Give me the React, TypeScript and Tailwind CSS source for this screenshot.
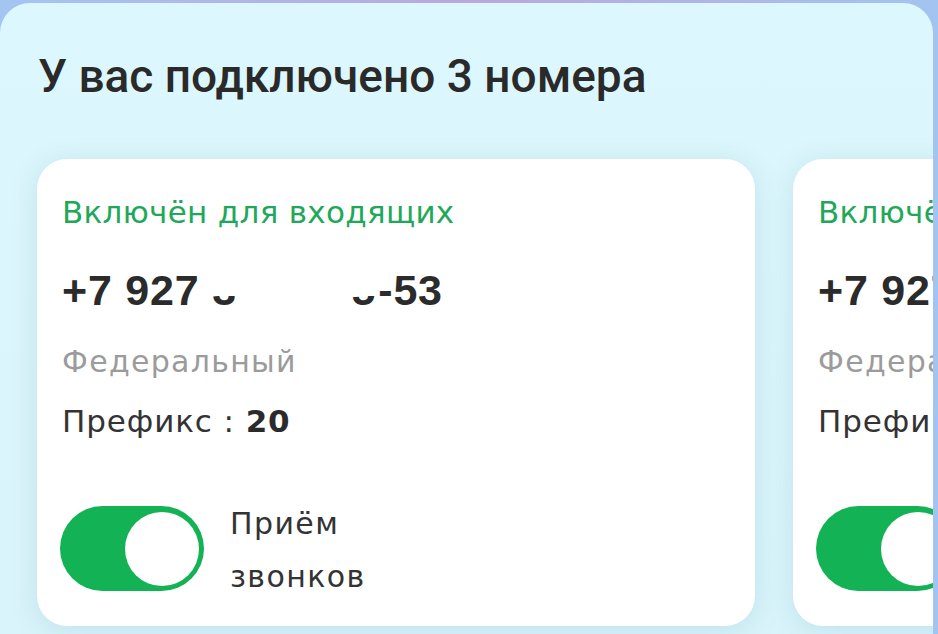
import React from "react"

type Line = {
  status: string
  head: string
  tail: string
  kind: string
  prefix: string
}

const lines: Line[] = [
  { status: "Включён для входящих", head: "+7 927 ", tail: "-53", kind: "Федеральный", prefix: "20" },
  { status: "Включён для входящих", head: "+7 927 ", tail: "-41", kind: "Федеральный", prefix: "21" },
]

function Toggle({ on }: { on: boolean }) {
  return (
    <div
      className={
        "w-[144px] h-[85px] shrink-0 rounded-full flex items-center px-[5px] " +
        (on ? "bg-[#12b255] justify-end" : "bg-gray-300 justify-start")
      }
    >
      <div className="w-[74px] h-[74px] rounded-full bg-white" />
    </div>
  )
}

function NumberCard({ line }: { line: Line }) {
  return (
    <div className="w-[718px] h-[467px] shrink-0 bg-white rounded-[30px] shadow-[0_4px_24px_rgba(120,170,190,0.25)] pl-[25px] pt-[38px] flex flex-col font-['DejaVu_Sans',sans-serif]">

      <div className="text-[31px] leading-none text-[#1fa85a] tracking-[0.3px]">
        {line.status}
      </div>

      {/* number is partly hidden in the picture */}
      <div className="mt-[41px] text-[43px] leading-none font-bold text-[#2b2b2b] flex font-['Liberation_Sans',sans-serif] tracking-[0.8px]">
        <span className="whitespace-pre">{line.head}</span>
        <span className="relative w-[166px] flex justify-between">
          <span>3</span>
          <span className="pr-[2px]">5</span>
          <span className="absolute left-0 top-0 w-full h-[27px] bg-white" />
          <span className="absolute left-[30px] top-0 right-[40px] h-[43px] bg-white" />
        </span>
        <span>{line.tail}</span>
      </div>

      <div className="mt-[35px] text-[30px] leading-none text-[#9b9b9b] tracking-[1.3px]">
        {line.kind}
      </div>

      <div className="mt-[29px] text-[31px] leading-none text-[#333333] tracking-[0.9px]">
        Префикс : <span className="font-bold text-[#2b2b2b]">{line.prefix}</span>
      </div>

      <div className="mt-[69px] -ml-[2px] flex items-start gap-[26px]">
        <Toggle on />
        <div className="-mt-[9px] text-[30px] leading-[53px] text-[#333333] tracking-[1.4px]">
          Приём
          <br />
          звонков
        </div>
      </div>

    </div>
  )
}

export default function App() {
  return (
    <div className="w-[938px] h-[634px] overflow-hidden bg-gradient-to-r from-[#a4c5f2] via-[#baa7dd] to-[#a2c4f0] pt-[3px]">

      <div className="h-full mr-[5px] rounded-t-[30px] bg-gradient-to-b from-[#dcf7fd] to-[#d9f4fa] overflow-hidden pl-[37px] pt-[50px]">

        <h1 className="text-[46px] leading-none font-medium text-[#2a2a2a] font-['Roboto',sans-serif] pl-[1px]">
          У вас подключено 3 номера
        </h1>

        <div className="mt-[60px] flex gap-[38px]">
          {lines.map((l, i) => (
            <NumberCard key={i} line={l} />
          ))}
        </div>

      </div>

    </div>
  )
}
